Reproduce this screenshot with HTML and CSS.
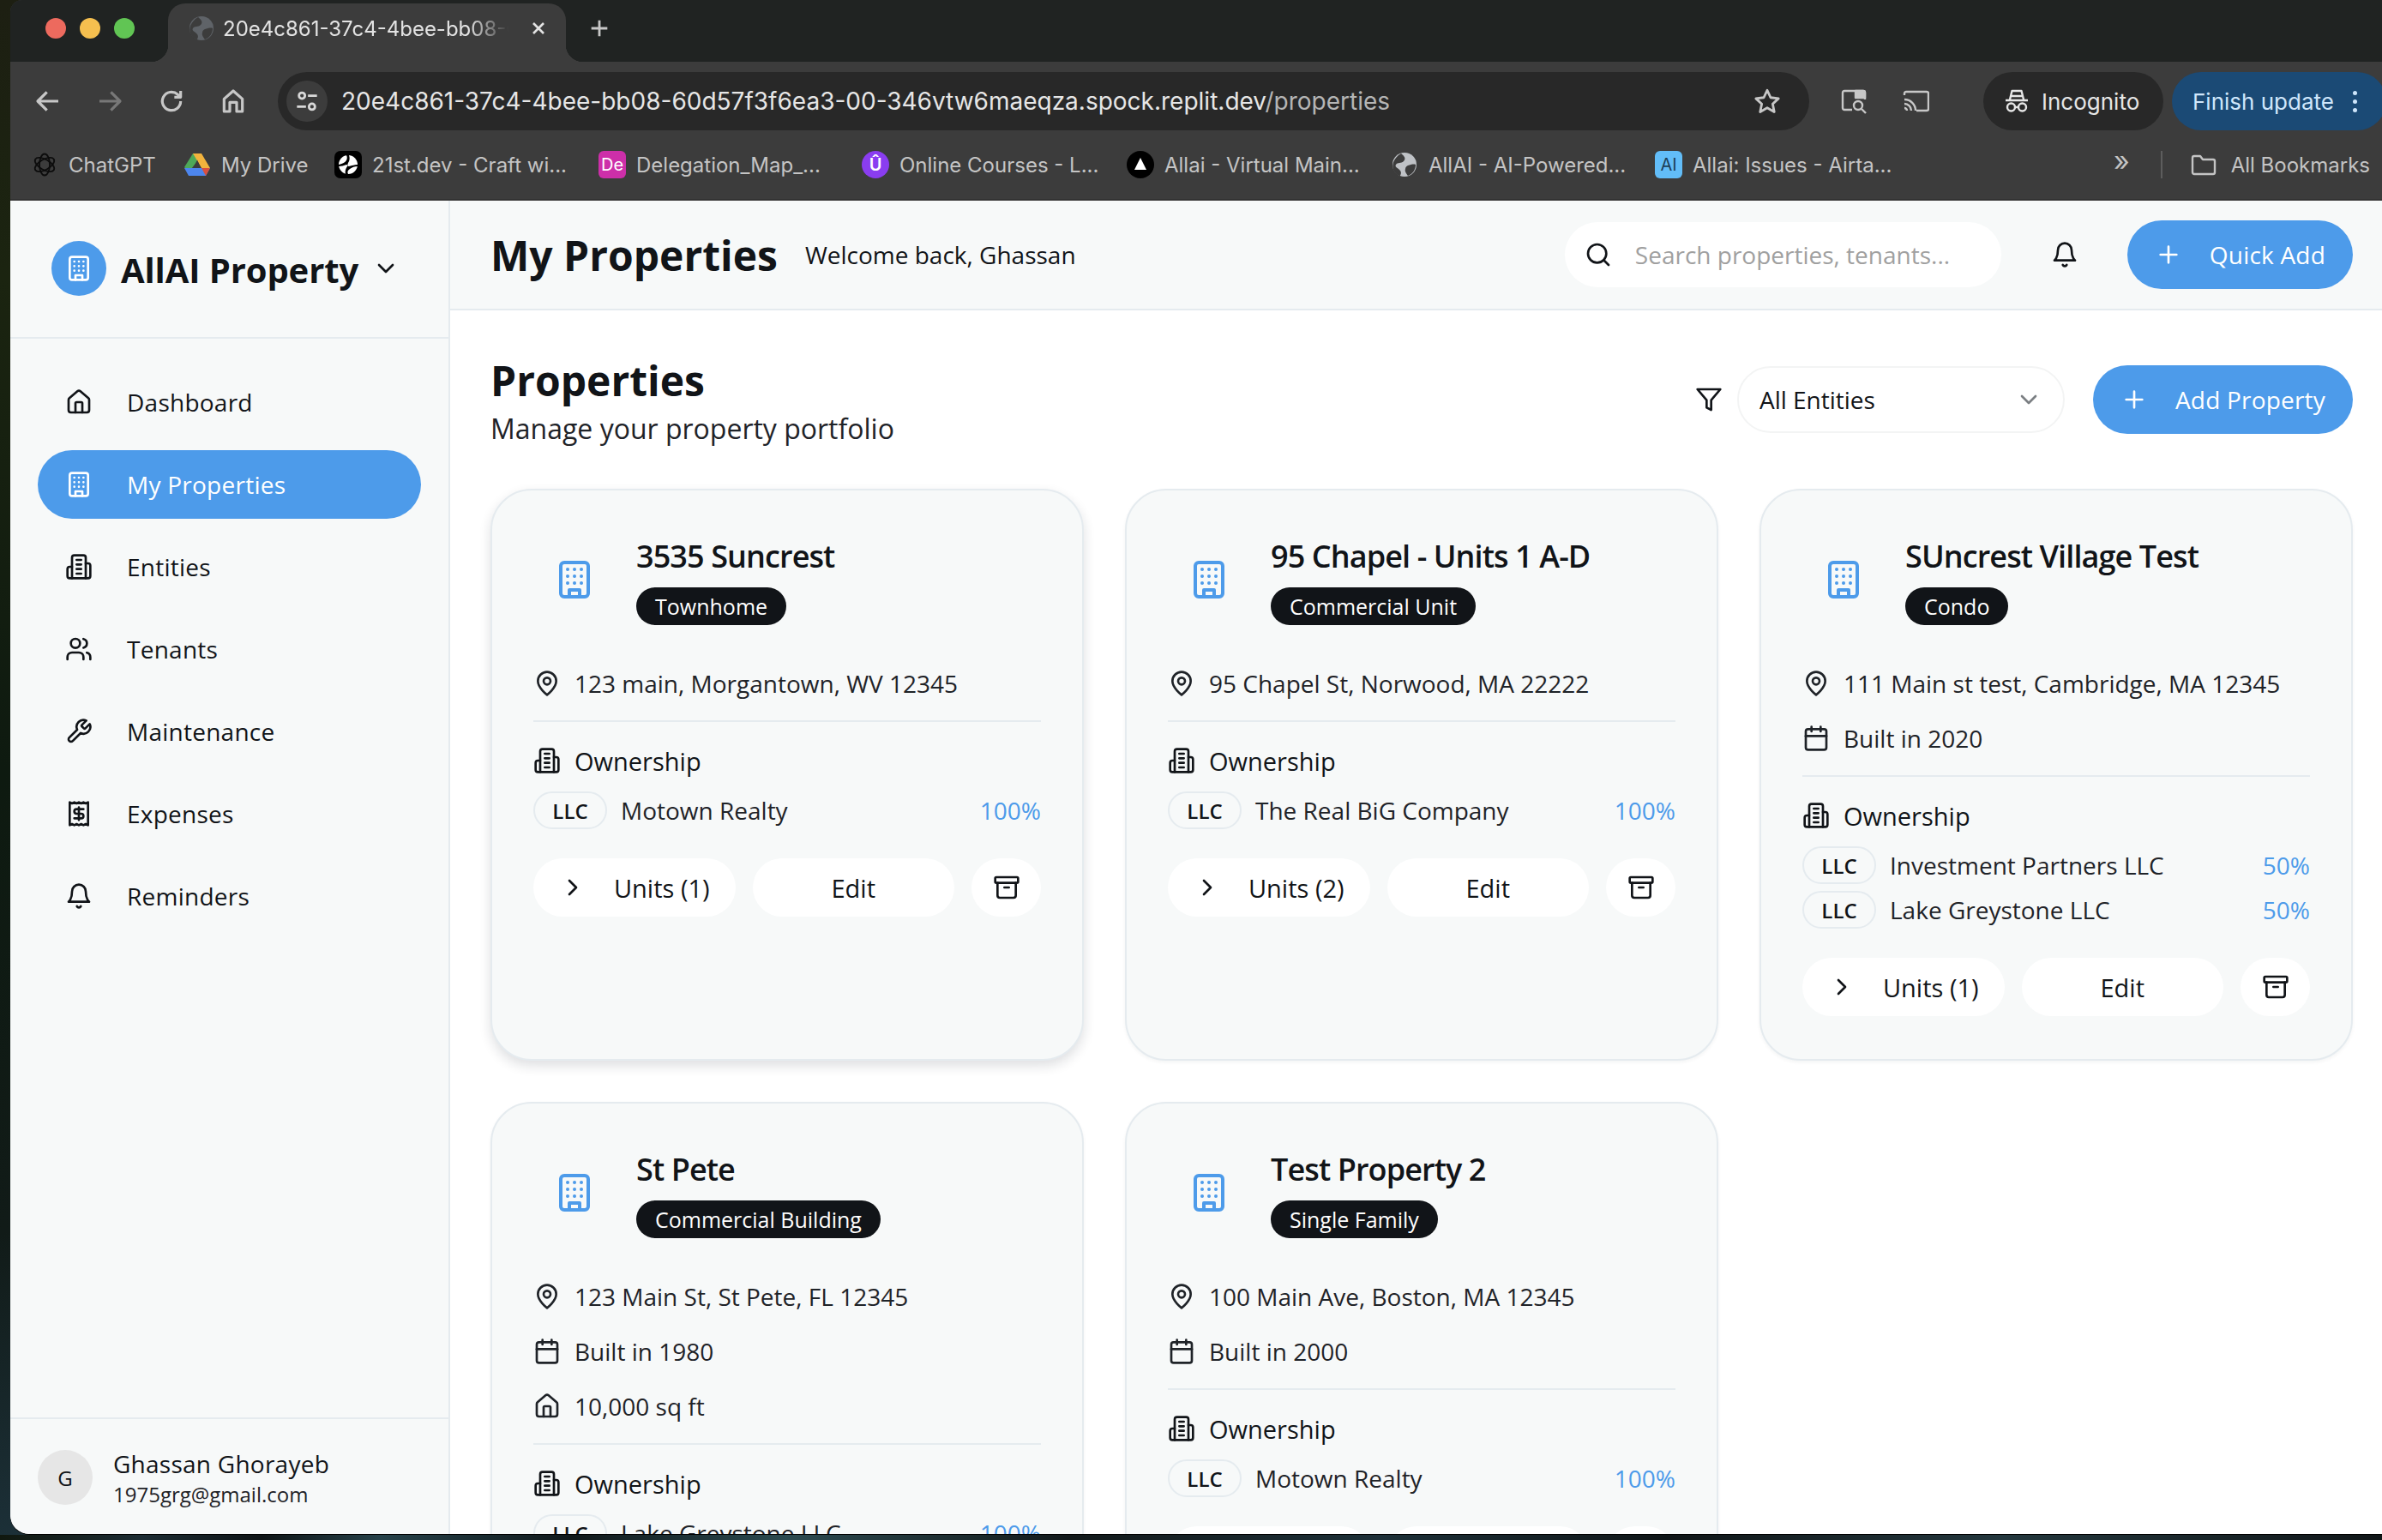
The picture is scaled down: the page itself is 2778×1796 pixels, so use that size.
FILE: index.html
```html
<!DOCTYPE html>
<html lang="en">
<head>
<meta charset="utf-8">
<title>AllAI Property</title>
<link rel="stylesheet" href="styles.css">
</head>
<body>
<svg class="sprite" aria-hidden="true">
  <symbol id="i-building" viewBox="0 0 24 24"><rect x="4" y="2" width="16" height="20" rx="2"/><path d="M9 22v-4h6v4M8 6h.01M16 6h.01M12 6h.01M12 10h.01M12 14h.01M16 10h.01M16 14h.01M8 10h.01M8 14h.01"/></symbol>
  <symbol id="i-house" viewBox="0 0 24 24"><path d="M15 21v-8a1 1 0 0 0-1-1h-4a1 1 0 0 0-1 1v8"/><path d="M3 10a2 2 0 0 1 .709-1.528l7-5.999a2 2 0 0 1 2.582 0l7 5.999A2 2 0 0 1 21 10v9a2 2 0 0 1-2 2H5a2 2 0 0 1-2-2z"/></symbol>
  <symbol id="i-building2" viewBox="0 0 24 24"><path d="M6 22V4a2 2 0 0 1 2-2h8a2 2 0 0 1 2 2v18Z"/><path d="M6 12H4a2 2 0 0 0-2 2v6a2 2 0 0 0 2 2h2M18 9h2a2 2 0 0 1 2 2v9a2 2 0 0 1-2 2h-2M10 6h4M10 10h4M10 14h4M10 18h4"/></symbol>
  <symbol id="i-users" viewBox="0 0 24 24"><path d="M16 21v-2a4 4 0 0 0-4-4H6a4 4 0 0 0-4 4v2"/><circle cx="9" cy="7" r="4"/><path d="M22 21v-2a4 4 0 0 0-3-3.87M16 3.13a4 4 0 0 1 0 7.75"/></symbol>
  <symbol id="i-wrench" viewBox="0 0 24 24"><path d="M14.7 6.3a1 1 0 0 0 0 1.4l1.6 1.6a1 1 0 0 0 1.4 0l3.77-3.77a6 6 0 0 1-7.94 7.94l-6.91 6.91a2.12 2.12 0 0 1-3-3l6.91-6.91a6 6 0 0 1 7.94-7.94l-3.76 3.76z"/></symbol>
  <symbol id="i-receipt" viewBox="0 0 24 24"><path d="M4 2v20l2-1 2 1 2-1 2 1 2-1 2 1 2-1 2 1V2l-2 1-2-1-2 1-2-1-2 1-2-1-2 1Z"/><path d="M16 8h-6a2 2 0 1 0 0 4h4a2 2 0 1 1 0 4H8M12 17.5v-11"/></symbol>
  <symbol id="i-bell" viewBox="0 0 24 24"><path d="M6 8a6 6 0 0 1 12 0c0 7 3 9 3 9H3s3-2 3-9"/><path d="M10.3 21a1.94 1.94 0 0 0 3.4 0"/></symbol>
  <symbol id="i-down" viewBox="0 0 24 24"><path d="m6 9 6 6 6-6"/></symbol>
  <symbol id="i-right" viewBox="0 0 24 24"><path d="m9 18 6-6-6-6"/></symbol>
  <symbol id="i-search" viewBox="0 0 24 24"><circle cx="11" cy="11" r="8"/><path d="m21 21-4.3-4.3"/></symbol>
  <symbol id="i-plus" viewBox="0 0 24 24"><path d="M5 12h14M12 5v14"/></symbol>
  <symbol id="i-filter" viewBox="0 0 24 24"><polygon points="22 3 2 3 10 12.46 10 19 14 21 14 12.46 22 3"/></symbol>
  <symbol id="i-pin" viewBox="0 0 24 24"><path d="M20 10c0 6-8 12-8 12s-8-6-8-12a8 8 0 0 1 16 0Z"/><circle cx="12" cy="10" r="3"/></symbol>
  <symbol id="i-cal" viewBox="0 0 24 24"><path d="M8 2v4M16 2v4"/><rect x="3" y="4" width="18" height="18" rx="2"/><path d="M3 10h18"/></symbol>
  <symbol id="i-archive" viewBox="0 0 24 24"><rect x="2" y="3" width="20" height="5" rx="1"/><path d="M4 8v11a2 2 0 0 0 2 2h12a2 2 0 0 0 2-2V8M10 12h4"/></symbol>
  <symbol id="i-globe" viewBox="0 0 32 32"><circle cx="16" cy="16" r="14" fill="currentColor"/><path d="M12 3c4 3 6 6 3 9s-7 1-9 4 3 4 5 7 0 5 0 6c-2 0-6-2-8-7s0-14 9-19ZM20 17c3-1 7-2 9-1 0 5-3 11-9 13-2-3-4-5-3-8 0-2 1-3 3-4Z" fill="#3c3c3c"/></symbol>
</svg>

<div class="window">
  <div class="tabstrip">
    <div class="lights"><i class="light red"></i><i class="light yellow"></i><i class="light green"></i></div>
    <div class="tab">
      <svg class="fav tab-globe"><use href="#i-globe"/></svg>
      <span class="tab-title">20e4c861-37c4-4bee-bb08-60d57f3f6ea3</span>
      <svg class="chrome-ic tab-x" viewBox="0 0 24 24"><path d="M6 6l12 12M18 6 6 18"/></svg>
    </div>
    <svg class="chrome-ic new-tab" viewBox="0 0 24 24"><path d="M12 4v16M4 12h16"/></svg>
  </div>

  <div class="toolbar">
    <span class="tool"><svg class="chrome-ic" viewBox="0 0 24 24"><path d="M21 12H4M11 4l-8 8 8 8"/></svg></span>
    <span class="tool dim"><svg class="chrome-ic" viewBox="0 0 24 24"><path d="M3 12h17M13 4l8 8-8 8"/></svg></span>
    <span class="tool"><svg class="chrome-ic" viewBox="0 0 24 24"><path d="M20 12a8 8 0 1 1-2.6-5.9L20 8.5M20 3v5.5h-5.5"/></svg></span>
    <span class="tool"><svg class="chrome-ic" viewBox="0 0 24 24"><path d="M4 21V10l8-7 8 7v11h-5v-8H9v8Z"/></svg></span>
    <div class="omnibox">
      <span class="site-btn"><svg class="chrome-ic" viewBox="0 0 24 24"><circle cx="7" cy="6.5" r="3"/><path d="M13 6.5h9M2 17.500h9"/><circle cx="17" cy="17.500" r="3"/></svg></span>
      <span class="url">20e4c861-37c4-4bee-bb08-60d57f3f6ea3-00-346vtw6maeqza.spock.replit.dev<span class="url-path">/properties</span></span>
      <svg class="chrome-ic star" viewBox="0 0 24 24"><path d="m12 3 2.800 6 6.500.8-4.800 4.500 1.300 6.500-5.800-3.300-5.800 3.300 1.300-6.500L2.700 9.800 9.200 9Z"/></svg>
    </div>
    <span class="tool side"><svg class="chrome-ic" viewBox="0 0 32 32"><path d="M14 26H5a2 2 0 0 1-2-2V6a2 2 0 0 1 2-2h22a2 2 0 0 1 2 2v8"/><path d="M18 4h9a2 2 0 0 1 2 2v6H18Z" fill="currentColor"/><circle cx="21" cy="21" r="5"/><path d="m25 25 5 5"/></svg></span>
    <span class="tool cast"><svg class="chrome-ic" viewBox="0 0 32 32"><path d="M3 9V7a2 2 0 0 1 2-2h24a2 2 0 0 1 2 2v18a2 2 0 0 1-2 2H17M3 14a13 13 0 0 1 13 13M3 19a8 8 0 0 1 8 8M3 24a3 3 0 0 1 3 3"/></svg></span>
    <i class="tool-sep"></i>
    <div class="incognito">
      <svg class="chrome-ic" viewBox="0 0 30 30"><path d="M2 14h26M7 13 9.500 3h11L23 13M8 9h14"/><circle cx="8.500" cy="22" r="4.500"/><circle cx="21.500" cy="22" r="4.500"/><path d="M13 22h4"/></svg>
      <span>Incognito</span>
    </div>
    <div class="update"><span>Finish update</span><span class="kebab"><i></i><i></i><i></i></span></div>
  </div>

  <div class="bookmarks">
    <a class="bm"><svg class="fav" viewBox="0 0 32 32"><g fill="none" stroke="#0c0c0c" stroke-width="1.800"><ellipse cx="16" cy="16" rx="6" ry="12.500"/><ellipse cx="16" cy="16" rx="6" ry="12.500" transform="rotate(60 16 16)"/><ellipse cx="16" cy="16" rx="6" ry="12.500" transform="rotate(120 16 16)"/></g></svg><span>ChatGPT</span></a>
    <a class="bm"><svg class="fav" viewBox="0 0 32 32"><path d="M11 3h10L16 12 6 25 1 19Z" fill="#4ea859"/><path d="M11 3h10l10 17H21Z" fill="#f2b33d"/><path d="M7 20h24l-5 9H6l-5-9Z" fill="#4d86ee"/><path d="M21 20h10l-5 9Z" fill="#d9503f"/><path d="M16 10.500 11.500 20h9Z" fill="#3c3c3c"/></svg><span>My Drive</span></a>
    <a class="bm"><svg class="fav" viewBox="0 0 32 32"><rect width="32" height="32" rx="7" fill="#000"/><circle cx="16" cy="16" r="11" fill="#fff"/><path d="M5 16c4-1 7-2 9-5 1-2 1-4 0-6l3 0c1 3 1 6-1 9-1 2-1 4 1 4 4-1 6-2 10-2l0 2c-4 0-6 1-9 3-3 2-3 4-2 6h-3c-1-3 0-6 2-9 1-1 0-2-1-2-3 1-6 2-9 2Z" fill="#000"/></svg><span>21st.dev - Craft wi...</span></a>
    <a class="bm"><span class="fav fav-de">De</span><span>Delegation_Map_...</span></a>
    <a class="bm"><span class="fav fav-u">Û</span><span>Online Courses - L...</span></a>
    <a class="bm"><svg class="fav" viewBox="0 0 32 32"><circle cx="16" cy="16" r="16" fill="#000"/><path d="M16 8 23 22H9Z" fill="#fff"/></svg><span>Allai - Virtual Main...</span></a>
    <a class="bm"><svg class="fav tab-globe light-globe"><use href="#i-globe"/></svg><span>AllAI - AI-Powered...</span></a>
    <a class="bm"><span class="fav fav-ai">AI</span><span>Allai: Issues - Airta...</span></a>
    <span class="bm-more">»</span>
    <i class="bm-sep"></i>
    <a class="bm bm-all"><svg class="chrome-ic" viewBox="0 0 32 32"><path d="M3 8a2 2 0 0 1 2-2h7l3 4h12a2 2 0 0 1 2 2v13a2 2 0 0 1-2 2H5a2 2 0 0 1-2-2Z"/></svg><span>All Bookmarks</span></a>
  </div>

  <div class="app">
    <aside class="sidebar">
      <div class="brand">
        <span class="brand-logo"><svg class="ic"><use href="#i-building"/></svg></span>
        <span class="brand-name">AllAI Property</span>
        <svg class="ic brand-caret"><use href="#i-down"/></svg>
      </div>
      <nav class="nav">
        <a class="nav-item"><svg class="ic"><use href="#i-house"/></svg>Dashboard</a>
        <a class="nav-item active"><svg class="ic"><use href="#i-building"/></svg>My Properties</a>
        <a class="nav-item"><svg class="ic"><use href="#i-building2"/></svg>Entities</a>
        <a class="nav-item"><svg class="ic"><use href="#i-users"/></svg>Tenants</a>
        <a class="nav-item"><svg class="ic"><use href="#i-wrench"/></svg>Maintenance</a>
        <a class="nav-item"><svg class="ic"><use href="#i-receipt"/></svg>Expenses</a>
        <a class="nav-item"><svg class="ic"><use href="#i-bell"/></svg>Reminders</a>
      </nav>
      <div class="user">
        <span class="avatar">G</span>
        <div class="user-info">
          <div class="user-name">Ghassan Ghorayeb</div>
          <div class="user-mail">1975grg@gmail.com</div>
        </div>
      </div>
    </aside>

    <main class="main">
      <header class="topbar">
        <h1 class="top-title">My Properties</h1>
        <span class="welcome">Welcome back, Ghassan</span>
        <div class="search"><svg class="ic"><use href="#i-search"/></svg><span>Search properties, tenants...</span></div>
        <span class="bell"><svg class="ic"><use href="#i-bell"/></svg></span>
        <button class="btn-primary"><svg class="ic"><use href="#i-plus"/></svg>Quick Add</button>
      </header>

      <section class="content">
        <div class="page-head">
          <div>
            <h2 class="page-title">Properties</h2>
            <p class="page-sub">Manage your property portfolio</p>
          </div>
          <div class="page-actions">
            <svg class="ic"><use href="#i-filter"/></svg>
            <div class="select"><span>All Entities</span><svg class="ic"><use href="#i-down"/></svg></div>
            <button class="btn-primary"><svg class="ic"><use href="#i-plus"/></svg>Add Property</button>
          </div>
        </div>

        <div class="grid">
          <article class="card hovered">
            <div class="card-head">
              <span class="card-icon"><svg class="ic"><use href="#i-building"/></svg></span>
              <div><h3 class="card-title">3535 Suncrest</h3><span class="badge">Townhome</span></div>
            </div>
            <div class="facts"><div class="fact"><svg class="ic"><use href="#i-pin"/></svg>123 main, Morgantown, WV 12345</div></div>
            <div class="owners">
              <div class="owners-title"><svg class="ic"><use href="#i-building2"/></svg>Ownership</div>
              <div class="owner"><span class="llc">LLC</span><span class="owner-name">Motown Realty</span><span class="pct">100%</span></div>
            </div>
            <div class="actions">
              <button class="act"><svg class="ic"><use href="#i-right"/></svg>Units (1)</button>
              <button class="act">Edit</button>
              <button class="act act-icon"><svg class="ic"><use href="#i-archive"/></svg></button>
            </div>
          </article>

          <article class="card">
            <div class="card-head">
              <span class="card-icon"><svg class="ic"><use href="#i-building"/></svg></span>
              <div><h3 class="card-title">95 Chapel - Units 1 A-D</h3><span class="badge">Commercial Unit</span></div>
            </div>
            <div class="facts"><div class="fact"><svg class="ic"><use href="#i-pin"/></svg>95 Chapel St, Norwood, MA 22222</div></div>
            <div class="owners">
              <div class="owners-title"><svg class="ic"><use href="#i-building2"/></svg>Ownership</div>
              <div class="owner"><span class="llc">LLC</span><span class="owner-name">The Real BiG Company</span><span class="pct">100%</span></div>
            </div>
            <div class="actions">
              <button class="act"><svg class="ic"><use href="#i-right"/></svg>Units (2)</button>
              <button class="act">Edit</button>
              <button class="act act-icon"><svg class="ic"><use href="#i-archive"/></svg></button>
            </div>
          </article>

          <article class="card">
            <div class="card-head">
              <span class="card-icon"><svg class="ic"><use href="#i-building"/></svg></span>
              <div><h3 class="card-title">SUncrest Village Test</h3><span class="badge">Condo</span></div>
            </div>
            <div class="facts">
              <div class="fact"><svg class="ic"><use href="#i-pin"/></svg>111 Main st test, Cambridge, MA 12345</div>
              <div class="fact"><svg class="ic"><use href="#i-cal"/></svg>Built in 2020</div>
            </div>
            <div class="owners">
              <div class="owners-title"><svg class="ic"><use href="#i-building2"/></svg>Ownership</div>
              <div class="owner"><span class="llc">LLC</span><span class="owner-name">Investment Partners LLC</span><span class="pct">50%</span></div>
              <div class="owner"><span class="llc">LLC</span><span class="owner-name">Lake Greystone LLC</span><span class="pct">50%</span></div>
            </div>
            <div class="actions">
              <button class="act"><svg class="ic"><use href="#i-right"/></svg>Units (1)</button>
              <button class="act">Edit</button>
              <button class="act act-icon"><svg class="ic"><use href="#i-archive"/></svg></button>
            </div>
          </article>

          <article class="card">
            <div class="card-head">
              <span class="card-icon"><svg class="ic"><use href="#i-building"/></svg></span>
              <div><h3 class="card-title">St Pete</h3><span class="badge">Commercial Building</span></div>
            </div>
            <div class="facts">
              <div class="fact"><svg class="ic"><use href="#i-pin"/></svg>123 Main St, St Pete, FL 12345</div>
              <div class="fact"><svg class="ic"><use href="#i-cal"/></svg>Built in 1980</div>
              <div class="fact"><svg class="ic"><use href="#i-house"/></svg>10,000 sq ft</div>
            </div>
            <div class="owners">
              <div class="owners-title"><svg class="ic"><use href="#i-building2"/></svg>Ownership</div>
              <div class="owner"><span class="llc">LLC</span><span class="owner-name">Lake Greystone LLC</span><span class="pct">100%</span></div>
            </div>
          </article>

          <article class="card">
            <div class="card-head">
              <span class="card-icon"><svg class="ic"><use href="#i-building"/></svg></span>
              <div><h3 class="card-title">Test Property 2</h3><span class="badge">Single Family</span></div>
            </div>
            <div class="facts">
              <div class="fact"><svg class="ic"><use href="#i-pin"/></svg>100 Main Ave, Boston, MA 12345</div>
              <div class="fact"><svg class="ic"><use href="#i-cal"/></svg>Built in 2000</div>
            </div>
            <div class="owners">
              <div class="owners-title"><svg class="ic"><use href="#i-building2"/></svg>Ownership</div>
              <div class="owner"><span class="llc">LLC</span><span class="owner-name">Motown Realty</span><span class="pct">100%</span></div>
            </div>
            <div class="actions">
              <button class="act"><svg class="ic"><use href="#i-right"/></svg>Units (1)</button>
              <button class="act">Edit</button>
              <button class="act act-icon"><svg class="ic"><use href="#i-archive"/></svg></button>
            </div>
          </article>
        </div>
      </section>
    </main>
  </div>
</div>
</body>
</html>
```

FILE: styles.css
```css
* { box-sizing: border-box; }
html, body { margin: 0; height: 100%; }
body {
  width: 2778px;
  height: 1796px;
  overflow: hidden;
  padding: 0 0 6px 12px;
  font-family: "Open Sans", "Liberation Sans", sans-serif;
  color: #111418;
  background:
    linear-gradient(90deg, #10180f 0%, #1c2c33 6%, #0e1416 11%, #26424a 16%, #10181a 24%, #2c4a50 33%, #12191a 45%, #1d3038 58%, #0f1517 70%, #24383e 84%, #101618 100%) 0 100% / 100% 6px no-repeat,
    linear-gradient(180deg, #1d1f12 0%, #1b2410 18%, #0e1a10 50%, #111b18 80%, #1c3038 100%);
}
h1, h2, h3, p { margin: 0; }
button { font: inherit; color: inherit; border: 0; cursor: pointer; }
.sprite { position: absolute; width: 0; height: 0; }

.window {
  height: 100%;
  display: flex;
  flex-direction: column;
  overflow: hidden;
  border-radius: 14px 0 0 22px;
  border-bottom: 1px solid #000;
  background: #3c3c3c;
}

/* Browser chrome */
.chrome-ic { width: 32px; height: 32px; fill: none; stroke: currentColor; stroke-width: 2.4; stroke-linejoin: round; flex: none; }
.tabstrip { height: 72px; flex: none; display: flex; align-items: flex-end; background: #202322; padding-left: 41px; }
.lights { display: flex; gap: 16px; align-self: flex-start; margin-top: 21px; }
.light { width: 24px; height: 24px; border-radius: 50%; }
.red { background: #ed6a5e; }
.yellow { background: #f5bf4f; }
.green { background: #61c554; }
.tab {
  position: relative;
  margin-left: 39px;
  width: 464px;
  height: 68px;
  padding: 0 0 10px 23px;
  display: flex;
  align-items: center;
  color: #e3e3e3;
  background: #3c3c3c;
  border-radius: 20px 20px 0 0;
}
.tab::before, .tab::after {
  content: "";
  position: absolute;
  bottom: 0;
  width: 20px;
  height: 20px;
}
.tab::before { left: -20px; background: radial-gradient(circle at 0 0, #202322 20px, #3c3c3c 20.500px); }
.tab::after { right: -20px; background: radial-gradient(circle at 100% 0, #202322 20px, #3c3c3c 20.500px); }
.tab-globe { color: #5f6368; }
.fav { width: 32px; height: 32px; flex: none; }
.tab-title {
  width: 333px;
  margin-left: 9px;
  overflow: hidden;
  white-space: nowrap;
  font: 24px "Inter", sans-serif;
  -webkit-mask-image: linear-gradient(90deg, #000 86%, transparent);
  mask-image: linear-gradient(90deg, #000 86%, transparent);
}
.tab-x { width: 24px; height: 24px; margin-left: 23px; stroke-width: 2.600; color: #e3e3e3; }
.new-tab { width: 28px; height: 28px; color: #c7c7c7; margin: 0 0 25px 25px; stroke-width: 2.400; }

.toolbar { height: 92px; flex: none; display: flex; align-items: flex-start; padding: 12px 0 0 8px; background: #3c3c3c; color: #c7c7c7; }
.tool { width: 72px; height: 68px; flex: none; display: flex; align-items: center; justify-content: center; }
.tool.dim { color: #787878; }
.omnibox { width: 1786px; height: 68px; margin-left: 16px; flex: none; display: flex; align-items: center; padding: 0 0 0 10px; background: #282828; border-radius: 34px; }
.site-btn { width: 48px; height: 48px; flex: none; display: flex; align-items: center; justify-content: center; background: #3c3c3c; border-radius: 50%; color: #d8d8d8; }
.site-btn .chrome-ic { width: 28px; height: 28px; }
.url { margin-left: 16px; font: 28px "Inter", sans-serif; color: #e6e6e6; white-space: nowrap; flex: 1; }
.url-path { color: #b5b5b5; }
.star { margin-right: 32px; width: 34px; height: 34px; color: #c7c7c7; stroke-width: 2; }
.tool.side { margin-left: 16px; }
.tool-sep { width: 3px; height: 32px; margin: 18px 0 0 17px; background: #5d5d5d; border-radius: 2px; }
.incognito { width: 210px; height: 68px; margin-left: 26px; padding-left: 24px; flex: none; display: flex; align-items: center; gap: 14px; background: #282828; border-radius: 34px; color: #e6e6e6; font: 26px "Inter", sans-serif; }
.incognito .chrome-ic { width: 30px; height: 30px; }
.update { width: 250px; height: 68px; margin-left: 10px; flex: none; display: flex; align-items: center; padding-left: 24px; background: #1b4a75; border-radius: 34px; color: #cfe6fb; font: 26px "Inter", sans-serif; }
.kebab { display: flex; flex-direction: column; gap: 5px; margin-left: 22px; }
.kebab i { width: 5px; height: 5px; border-radius: 50%; background: #cfe6fb; }

.bookmarks {
  height: 70px;
  flex: none;
  display: grid;
  grid-template-columns: 178px 176px 308px 307px 309px 308px 308px 308px 1fr auto auto;
  align-items: center;
  padding: 0 14px 12px 24px;
  background: #3c3c3c;
  border-bottom: 2px solid #333;
  color: #c4c4c4;
  font: 24px "Inter", sans-serif;
}
.bm { display: flex; align-items: center; gap: 12px; white-space: nowrap; }
.fav-de, .fav-ai { border-radius: 6px; display: flex; align-items: center; justify-content: center; font-size: 20px; }
.fav-de { background: #cd2fa9; color: #fff; }
.fav-ai { background: #62bdf8; color: #1d3f57; }
.fav-u { background: #8a3df0; color: #fff; border-radius: 50%; display: flex; align-items: center; justify-content: center; font-size: 20px; font-weight: 600; }
.light-globe { color: #bfc2c6; }
.bm-more { justify-self: end; margin-right: 36px; font-size: 32px; line-height: 1; margin-top: -8px; }
.bm-sep { width: 2px; height: 32px; background: #5d5d5d; margin-right: 32px; }
.bm-all { gap: 16px; }
.bm-all .chrome-ic { width: 32px; height: 32px; }

/* App shell */
.app { flex: 1; min-height: 0; display: flex; background: #fff; border-radius: 0 0 0 22px; overflow: hidden; }
.ic { width: 32px; height: 32px; flex: none; fill: none; stroke: currentColor; stroke-width: 2; stroke-linecap: round; stroke-linejoin: round; }

.sidebar { width: 513px; flex: none; display: flex; flex-direction: column; background: #f7f9f9; border-right: 2px solid #e5ebef; }
.brand { height: 161px; flex: none; display: flex; align-items: center; padding: 0 0 2px 48px; border-bottom: 2px solid #e5ebef; }
.brand-logo { width: 64px; height: 64px; flex: none; display: flex; align-items: center; justify-content: center; border-radius: 50%; background: #4d9bea; color: #fff; }
.brand-logo .ic { width: 32px; height: 32px; }
.brand-name { margin-left: 17px; font-size: 40px; font-weight: 700; white-space: nowrap; letter-spacing: -.1px; position: relative; top: 2px; }
.brand-caret { margin-left: 16px; }
.nav { display: flex; flex-direction: column; gap: 16px; padding: 34px 32px 0; flex: 1; }
.nav-item { height: 80px; display: flex; align-items: center; gap: 40px; padding-left: 32px; border-radius: 40px; font-size: 28px; letter-spacing: .25px; }
.nav-item.active { background: #4d9bea; color: #fff; }
.user { flex: none; height: 136px; display: flex; align-items: center; gap: 24px; padding: 2px 32px 0; border-top: 2px solid #e5ebef; }
.avatar { width: 64px; height: 64px; flex: none; display: flex; align-items: center; justify-content: center; border-radius: 50%; background: #e6e6e6; font-size: 24px; font-weight: 500; }
.user-name { font-size: 28px; line-height: 40px; font-weight: 500; letter-spacing: .25px; }
.user-mail { font-size: 24px; line-height: 32px; color: #1f2328; }

.main { flex: 1; min-width: 0; display: flex; flex-direction: column; overflow: hidden; }
.topbar { height: 128px; flex: none; display: flex; align-items: center; padding: 0 34px 0 47px; background: #f7f9f9; border-bottom: 2px solid #e5ebef; }
.top-title { font-size: 48px; font-weight: 700; white-space: nowrap; }
.welcome { margin-left: 32px; font-size: 28px; white-space: nowrap; }
.search { width: 509px; height: 76px; margin-left: auto; display: flex; align-items: center; gap: 27px; padding-left: 23px; background: #fff; border-radius: 38px; color: #a0a0a0; font-size: 28px; white-space: nowrap; }
.search .ic { color: #111418; }
.bell { width: 80px; height: 80px; margin: 0 33px 0 34px; flex: none; display: flex; align-items: center; justify-content: center; }
.btn-primary { height: 80px; flex: none; display: flex; align-items: center; gap: 32px; padding: 0 32px; border-radius: 40px; background: #4d9bea; color: #fff; font-size: 28px; font-weight: 500; letter-spacing: .2px; white-space: nowrap; }

.content { flex: 1; min-height: 0; padding: 50px 34px 0 47px; overflow: hidden; }
.page-head { display: flex; justify-content: space-between; align-items: center; margin-bottom: 46px; }
.page-title { font-size: 48px; line-height: 64px; font-weight: 700; }
.page-sub { font-size: 32px; line-height: 48px; color: #1f2328; }
.page-actions { display: flex; align-items: center; margin-bottom: 4px; }
.select { width: 382px; height: 78px; margin: 0 33px 0 17px; display: flex; align-items: center; justify-content: space-between; padding: 0 24px; background: #fff; border: 2px solid #f3f4f4; border-radius: 40px; font-size: 28px; }
.select .ic { color: #7b7f83; }

.grid { display: grid; grid-template-columns: repeat(3, 1fr); column-gap: 48px; row-gap: 48px; align-items: stretch; }
.card { padding: 50px 48px 50px; background: #f7f9f9; border: 2px solid #e5ebef; border-radius: 48px; box-shadow: 0 2px 4px rgba(20,30,40,.05); }
.card.hovered { box-shadow: 0 6px 14px rgba(20,30,40,.14); }
.card-head { display: flex; align-items: center; gap: 24px; margin-bottom: 48px; }
.card-icon { width: 96px; flex: none; display: flex; justify-content: center; color: #4d9bea; }
.card-icon .ic { width: 48px; height: 48px; stroke-width: 2; }
.card-title { font-size: 36px; line-height: 54px; font-weight: 600; letter-spacing: -.9px; margin-bottom: 9px; }
.badge { display: inline-block; height: 44px; padding: 0 22px; line-height: 44px; border-radius: 22px; background: #111418; color: #fff; font-size: 25px; font-weight: 500; }
.facts { display: flex; flex-direction: column; gap: 24px; }
.fact { height: 40px; display: flex; align-items: center; gap: 16px; font-size: 28px; color: #1f2328; }
.owners { margin-top: 23px; padding-top: 24px; border-top: 2px solid #e5ebef; }
.owners-title { height: 42px; display: flex; align-items: center; gap: 16px; margin-bottom: 15px; font-size: 29px; font-weight: 500; }
.owner { height: 44px; display: flex; align-items: center; margin-bottom: 8px; font-size: 28px; color: #1f2328; }
.llc { width: 86px; height: 44px; flex: none; display: flex; align-items: center; justify-content: center; border: 2px solid #e5ebef; border-radius: 22px; font-size: 24px; font-weight: 600; color: #111418; }
.owner-name { flex: 1; margin-left: 16px; }
.pct { color: #4d9bea; }
.actions { display: flex; gap: 20px; margin-top: 34px; }
.act { flex: 1; height: 68px; display: flex; align-items: center; justify-content: center; gap: 32px; background: #fff; border-radius: 34px; font-size: 29px; font-weight: 500; }
.act-icon { flex: 0 0 81px; }
```
